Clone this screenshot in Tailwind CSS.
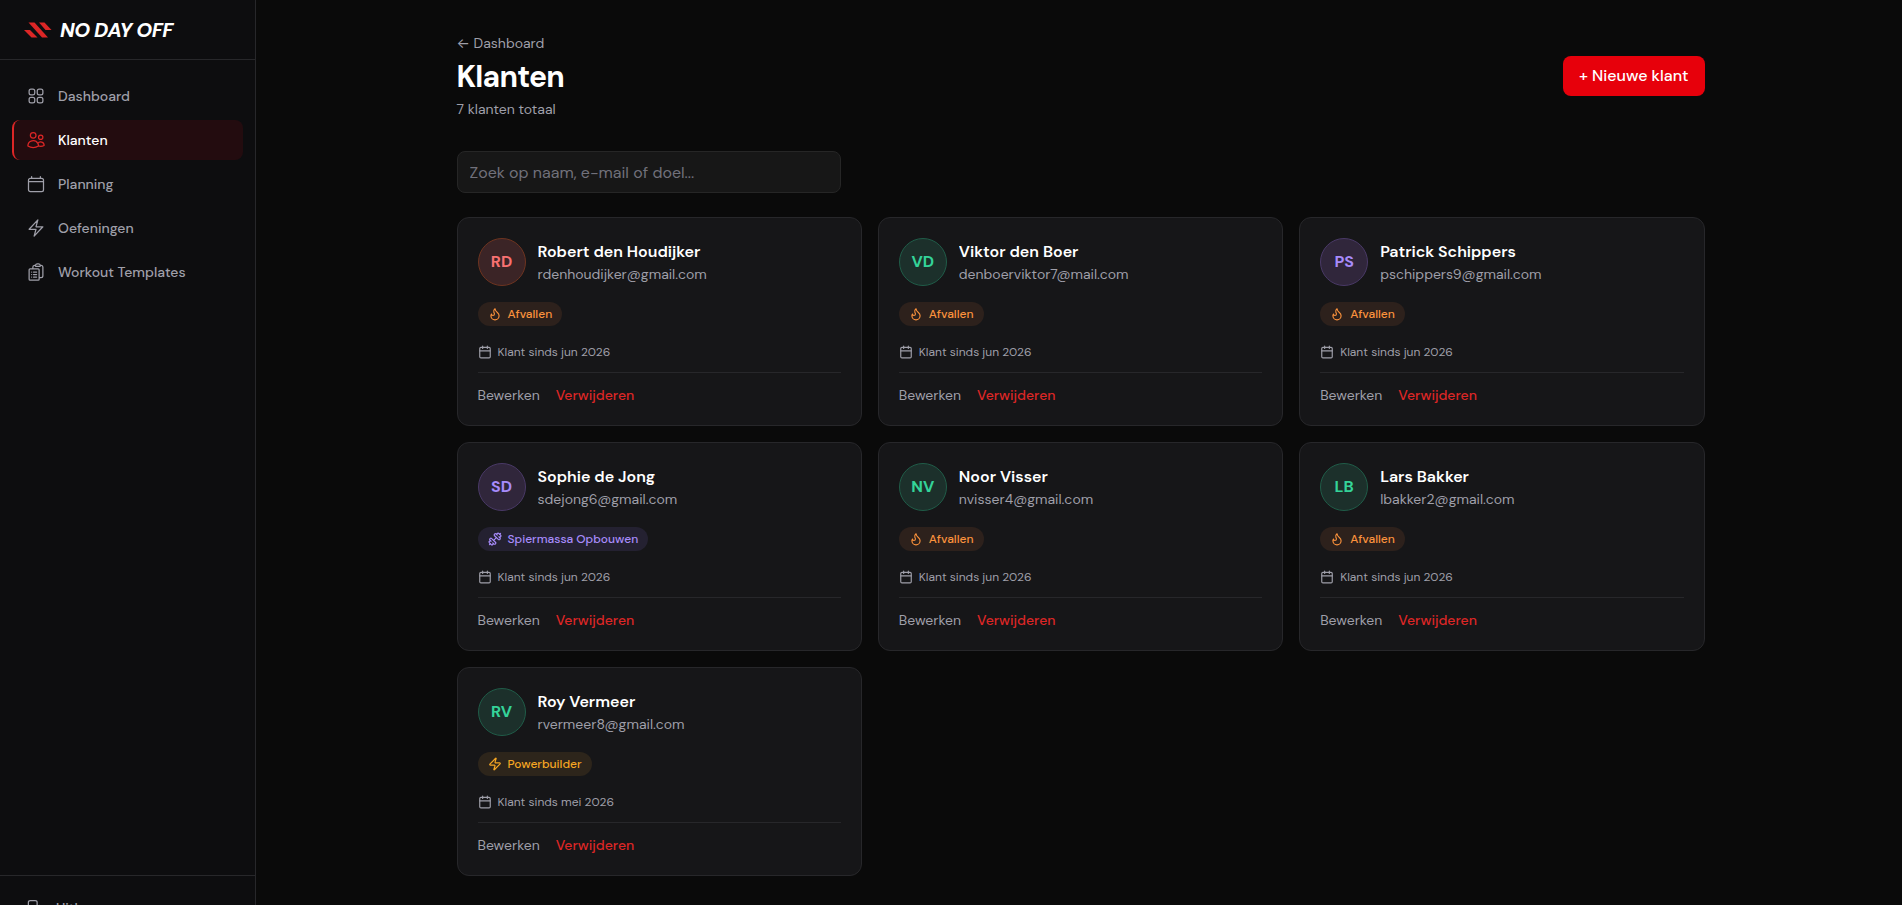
<!DOCTYPE html>
<html lang="nl">
<head>
  <meta charset="UTF-8" />
  <meta name="viewport" content="width=device-width, initial-scale=1.0" />
  <title>Klanten – No Day Off</title>

  <!-- Tailwind (CDN) -->
  <script src="https://cdn.jsdelivr.net/npm/@tailwindcss/browser@4"></script>
</head>

<body class="bg-[#0a0a0a] text-white font-['DM_Sans','Open_Sans',sans-serif]">
  <!-- Zijbalk -->
  <aside class="fixed inset-y-0 left-0 flex w-64 flex-col overflow-hidden border-r border-zinc-800 bg-[#0d0d0f]">
    <div class="flex h-15 shrink-0 items-center gap-2 border-b border-zinc-800 px-6">
      <svg class="h-4 w-7" viewBox="0 0 28 16" fill="#dc2626" aria-hidden="true">
        <path d="M0 8h6l7.500 7.500h-6z" />
        <path d="M4.500 .5h6l13.500 15h-6z" />
        <path d="M15 .5h5.500l7 7.500h-6z" />
      </svg>
      <span class="text-xl font-extrabold italic tracking-tight">NO DAY OFF</span>
    </div>

    <nav class="flex-1 space-y-1 px-3 py-4 text-sm font-medium text-zinc-400">
      <a href="#" class="flex h-10 items-center gap-3 rounded-lg border-l-2 border-transparent px-3">
        <svg class="size-5" viewBox="0 0 24 24" fill="none" stroke="currentColor" stroke-width="1.5" stroke-linecap="round" stroke-linejoin="round"><path d="M3.75 6A2.25 2.25 0 0 1 6 3.75h2.25A2.25 2.25 0 0 1 10.5 6v2.25a2.25 2.25 0 0 1-2.25 2.25H6a2.25 2.25 0 0 1-2.25-2.25V6ZM3.75 15.75A2.25 2.25 0 0 1 6 13.5h2.25a2.25 2.25 0 0 1 2.25 2.25V18a2.25 2.25 0 0 1-2.25 2.25H6A2.25 2.25 0 0 1 3.75 18v-2.25ZM13.5 6a2.25 2.25 0 0 1 2.25-2.25H18A2.25 2.25 0 0 1 20.25 6v2.25A2.25 2.25 0 0 1 18 10.5h-2.25a2.25 2.25 0 0 1-2.25-2.25V6ZM13.5 15.75a2.25 2.25 0 0 1 2.25-2.25H18a2.25 2.25 0 0 1 2.25 2.25V18A2.25 2.25 0 0 1 18 20.25h-2.25A2.25 2.25 0 0 1 13.5 18v-2.25Z" /></svg>
        Dashboard
      </a>
      <a href="#" aria-current="page" class="flex h-10 items-center gap-3 rounded-lg border-l-2 border-[#dc2626] bg-[#230c0f] px-3 text-white">
        <svg class="size-5 text-[#dc2626]" viewBox="0 0 24 24" fill="none" stroke="currentColor" stroke-width="1.5" stroke-linecap="round" stroke-linejoin="round"><path d="M15 19.128a9.38 9.38 0 0 0 2.625.372 9.337 9.337 0 0 0 4.121-.952 4.125 4.125 0 0 0-7.533-2.493M15 19.128v-.003c0-1.113-.285-2.16-.786-3.07M15 19.128v.106A12.318 12.318 0 0 1 8.624 21c-2.331 0-4.512-.645-6.374-1.766l-.001-.109a6.375 6.375 0 0 1 11.964-3.07M12 6.375a3.375 3.375 0 1 1-6.75 0 3.375 3.375 0 0 1 6.75 0Zm8.25 2.25a2.625 2.625 0 1 1-5.25 0 2.625 2.625 0 0 1 5.25 0Z" /></svg>
        Klanten
      </a>
      <a href="#" class="flex h-10 items-center gap-3 rounded-lg border-l-2 border-transparent px-3">
        <svg class="size-5" viewBox="0 0 24 24" fill="none" stroke="currentColor" stroke-width="1.5" stroke-linecap="round" stroke-linejoin="round"><path d="M6.75 3v2.25M17.25 3v2.25M3 18.75V7.5a2.25 2.25 0 0 1 2.25-2.25h13.5A2.25 2.25 0 0 1 21 7.5v11.25A2.25 2.25 0 0 1 18.75 21H5.25A2.25 2.25 0 0 1 3 18.75ZM3 9h18" /></svg>
        Planning
      </a>
      <a href="#" class="flex h-10 items-center gap-3 rounded-lg border-l-2 border-transparent px-3">
        <svg class="size-5" viewBox="0 0 24 24" fill="none" stroke="currentColor" stroke-width="1.5" stroke-linecap="round" stroke-linejoin="round"><path d="m3.75 13.5 10.5-11.25L12 10.5h8.25L9.75 21.75 12 13.5H3.75Z" /></svg>
        Oefeningen
      </a>
      <a href="#" class="flex h-10 items-center gap-3 rounded-lg border-l-2 border-transparent px-3">
        <svg class="size-5" viewBox="0 0 24 24" fill="none" stroke="currentColor" stroke-width="1.5" stroke-linecap="round" stroke-linejoin="round"><path d="M9 12h3.75M9 15h3.75M9 18h3.75m3 .75H18a2.25 2.25 0 0 0 2.25-2.25V6.108c0-1.135-.845-2.098-1.976-2.192a48.424 48.424 0 0 0-1.123-.08m-5.801 0c-.065.21-.1.433-.1.664 0 .414.336.75.75.75h4.5a.75.75 0 0 0 .75-.75 2.25 2.25 0 0 0-.1-.664m-5.8 0A2.251 2.251 0 0 1 13.5 2.25H15c1.012 0 1.867.668 2.15 1.586m-5.8 0c-.376.023-.75.05-1.124.08C9.095 4.01 8.25 4.973 8.25 6.108V8.25m0 0H4.875c-.621 0-1.125.504-1.125 1.125v11.25c0 .621.504 1.125 1.125 1.125h9.75c.621 0 1.125-.504 1.125-1.125V9.375c0-.621-.504-1.125-1.125-1.125H8.25ZM6.75 12h.008v.008H6.75V12Zm0 3h.008v.008H6.75V15Zm0 3h.008v.008H6.75V18Z" /></svg>
        Workout Templates
      </a>
    </nav>

    <!-- Voet van de zijbalk, loopt onder de rand door -->
    <div class="-mb-[35px] shrink-0 border-t border-zinc-800 p-3">
      <button type="button" class="flex h-10 w-full items-center gap-3 rounded-lg px-3 text-sm font-medium text-zinc-400">
        <svg class="size-5" viewBox="0 0 24 24" fill="none" stroke="currentColor" stroke-width="1.5" stroke-linecap="round" stroke-linejoin="round"><path d="M15.75 9V5.25A2.25 2.25 0 0 0 13.5 3h-6a2.25 2.25 0 0 0-2.25 2.25v13.5A2.25 2.25 0 0 0 7.5 21h6a2.25 2.25 0 0 0 2.25-2.25V15m3 0 3-3m0 0-3-3m3 3H9" /></svg>
        Uitloggen
      </button>
    </div>
  </aside>

  <!-- Inhoud -->
  <main class="ml-[259px] pt-8 pb-7">
    <div class="mx-auto max-w-7xl px-4">
      <header class="mb-8 flex items-center justify-between">
        <div>
          <a href="#" class="block text-sm leading-[22px] text-zinc-400"><span class="font-['Inter']">←</span> Dashboard</a>
          <h1 class="mt-[5px] text-3xl font-bold tracking-tight">Klanten</h1>
          <p class="mt-1 text-sm text-zinc-400">7 klanten totaal</p>
        </div>
        <button type="button" class="h-10 rounded-lg bg-red-600 px-4 font-medium">+ Nieuwe klant</button>
      </header>

      <input id="search" type="search" aria-label="Zoek klanten" placeholder="Zoek op naam, e-mail of doel..." class="mb-6 block h-[42px] w-full max-w-sm rounded-lg border border-neutral-800 bg-neutral-900 px-3 placeholder:text-zinc-500" />

      <section id="clients" class="grid gap-4 md:grid-cols-2 lg:grid-cols-3"></section>
    </div>
  </main>

  <script>
    const avatars = {
      red: 'border-[#6e3420] bg-[#3b2426] text-[#f87171]',
      green: 'border-[#205c48] bg-[#1c302b] text-[#34d399]',
      purple: 'border-[#493966] bg-[#30263b] text-[#a78bfa]',
    }

    const goals = {
      Afvallen: {
        cls: 'bg-[#2d211c] text-[#fb923c]',
        icon: '<path d="M8.5 14.5A2.5 2.5 0 0 0 11 12c0-1.38-.5-2-1-3-1.072-2.143-.224-4.054 2-6 .5 2.5 2 4.9 4 6.5 2 1.6 3 3.5 3 5.5a7 7 0 1 1-14 0c0-1.153.433-2.294 1-3a2.5 2.5 0 0 0 2.5 2.5z"/>',
      },
      'Spiermassa Opbouwen': {
        cls: 'bg-[#242131] text-[#a78bfa]',
        icon: '<path d="M17.596 12.768a2 2 0 1 0 2.829-2.829l-1.768-1.767a2 2 0 0 0 2.828-2.829l-2.828-2.828a2 2 0 0 0-2.829 2.828l-1.767-1.768a2 2 0 1 0-2.829 2.829z"/><path d="m2.5 21.5 1.4-1.4"/><path d="m20.1 3.9 1.4-1.4"/><path d="M5.343 21.485a2 2 0 1 0 2.829-2.828l1.767 1.768a2 2 0 1 0 2.829-2.829l-6.364-6.364a2 2 0 1 0-2.829 2.829l1.768 1.767a2 2 0 0 0-2.828 2.829z"/><path d="m9.6 14.4 4.8-4.8"/>',
      },
      Powerbuilder: {
        cls: 'bg-[#2d251b] text-[#f5a623]',
        icon: '<path d="M4 14a1 1 0 0 1-.78-1.63l9.9-10.2a.5.5 0 0 1 .86.46l-1.92 6.02A1 1 0 0 0 13 10h7a1 1 0 0 1 .78 1.63l-9.9 10.2a.5.5 0 0 1-.86-.46l1.92-6.02A1 1 0 0 0 11 14z"/>',
      },
    }

    const clients = [
      { name: 'Robert den Houdijker', email: 'rdenhoudijker@gmail.com', initials: 'RD', color: 'red', goal: 'Afvallen', since: 'jun 2026' },
      { name: 'Viktor den Boer', email: 'denboerviktor7@mail.com', initials: 'VD', color: 'green', goal: 'Afvallen', since: 'jun 2026' },
      { name: 'Patrick Schippers', email: 'pschippers9@gmail.com', initials: 'PS', color: 'purple', goal: 'Afvallen', since: 'jun 2026' },
      { name: 'Sophie de Jong', email: 'sdejong6@gmail.com', initials: 'SD', color: 'purple', goal: 'Spiermassa Opbouwen', since: 'jun 2026' },
      { name: 'Noor Visser', email: 'nvisser4@gmail.com', initials: 'NV', color: 'green', goal: 'Afvallen', since: 'jun 2026' },
      { name: 'Lars Bakker', email: 'lbakker2@gmail.com', initials: 'LB', color: 'green', goal: 'Afvallen', since: 'jun 2026' },
      { name: 'Roy Vermeer', email: 'rvermeer8@gmail.com', initials: 'RV', color: 'green', goal: 'Powerbuilder', since: 'mei 2026' },
    ]

    const card = c => `
      <article class="rounded-xl border border-[#27272a] bg-[#161618] p-5">
        <div class="flex items-center gap-3">
          <div class="flex size-12 shrink-0 items-center justify-center rounded-full border font-bold ${avatars[c.color]}">${c.initials}</div>
          <div class="min-w-0">
            <h2 class="truncate font-semibold">${c.name}</h2>
            <p class="truncate text-sm text-zinc-400">${c.email}</p>
          </div>
        </div>
        <div class="mt-4 flex">
          <span class="flex h-6 items-center gap-1.5 rounded-full px-2.5 text-xs font-medium ${goals[c.goal].cls}">
            <svg class="size-3.5" viewBox="0 0 24 24" fill="none" stroke="currentColor" stroke-width="2" stroke-linecap="round" stroke-linejoin="round">${goals[c.goal].icon}</svg>
            ${c.goal}
          </span>
        </div>
        <p class="mt-4 flex h-5 items-center gap-1.5 text-xs text-zinc-400">
          <svg class="size-3.5" viewBox="0 0 24 24" fill="none" stroke="currentColor" stroke-width="2" stroke-linecap="round" stroke-linejoin="round"><path d="M8 2v4M16 2v4M3 10h18"/><rect width="18" height="18" x="3" y="4" rx="2"/></svg>
          Klant sinds ${c.since}
        </p>
        <div class="mt-2.5 flex gap-4 border-t border-[#27272a] pt-3 text-sm">
          <button type="button" class="text-zinc-400">Bewerken</button>
          <button type="button" class="font-medium text-[#dc2626]">Verwijderen</button>
        </div>
      </article>`

    const list = document.getElementById('clients')
    const search = document.getElementById('search')

    function render() {
      const q = search.value.toLowerCase()
      list.innerHTML = clients
        .filter(c => (c.name + c.email + c.goal).toLowerCase().includes(q))
        .map(card)
        .join('')
    }

    search.addEventListener('input', render)
    render()
  </script>
</body>
</html>
